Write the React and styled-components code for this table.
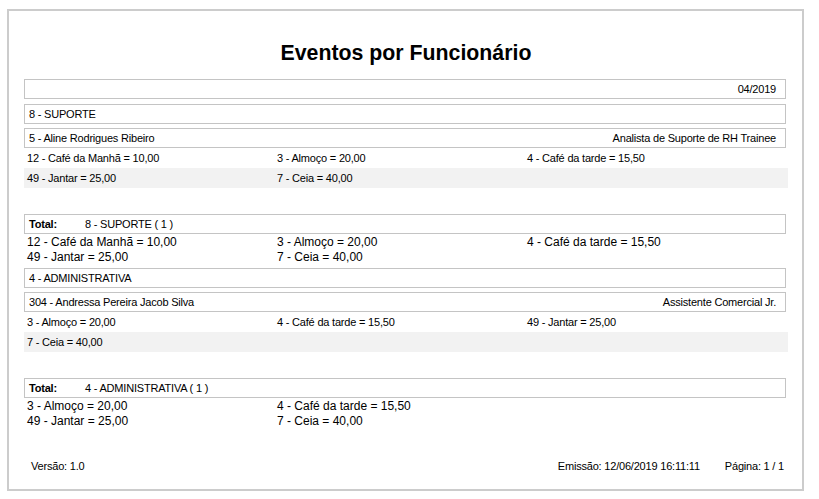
import styled, { createGlobalStyle } from "styled-components";

const GlobalStyle = createGlobalStyle`
  body {
    margin: 0;
    background: #fff;
    font-family: "Liberation Sans", Arial, sans-serif;
    color: #000;
  }
`;

const Page = styled.div`
  box-sizing: border-box;
  width: 797px;
  height: 482px;
  margin: 9px 0 0 7px;
  border: 2px solid #cccccc;
  padding: 30px 14px 0 15px;
  display: flex;
  flex-direction: column;
`;

const Title = styled.h1`
  margin: 0 0 14px;
  font-size: 21.3px;
  line-height: 24px;
  font-weight: bold;
  text-align: center;
`;

const Box = styled.div`
  box-sizing: border-box;
  width: 762px;
  height: 20px;
  margin-top: ${(p) => p.$gap || 0}px;
  border: 1px solid #c4c4c4;
  padding: 0 9px 0 4px;
  display: flex;
  align-items: center;
  justify-content: space-between;
  font-size: 11px;
  letter-spacing: -0.2px;
  white-space: nowrap;
`;

const TotalLabel = styled.span`
  display: inline-block;
  width: 56px;
  font-weight: bold;
`;

const EventRow = styled.div`
  display: grid;
  grid-template-columns: repeat(3, 250px);
  height: 20px;
  align-items: center;
  padding-left: 3px;
  background: ${(p) => (p.$shaded ? "#f2f2f2" : "transparent")};
  font-size: 11px;
  letter-spacing: -0.2px;
  white-space: nowrap;
`;

const TotalGrid = styled.div`
  display: grid;
  grid-template-columns: repeat(3, 250px);
  padding: 1px 0 0 3px;
  font-size: 12px;
  line-height: 15px;
  white-space: nowrap;
`;

const Section = styled.div`
  margin-top: ${(p) => p.$gap}px;
`;

const Footer = styled.div`
  margin-top: auto;
  display: flex;
  align-items: center;
  padding: 0 4px 16px 7px;
  font-size: 11px;
  line-height: 14px;
  letter-spacing: -0.2px;
`;

const Spacer = styled.div`
  flex: 1;
`;

const FooterItem = styled.span`
  margin-left: ${(p) => p.$gap || 0}px;
`;

const sections = [
  {
    dept: "8 - SUPORTE",
    employee: "5 - Aline Rodrigues Ribeiro",
    role: "Analista de Suporte de RH Trainee",
    events: [
      ["12 - Café da Manhã = 10,00", "3 - Almoço = 20,00", "4 - Café da tarde = 15,50"],
      ["49 - Jantar = 25,00", "7 - Ceia = 40,00", ""],
    ],
    totals: [
      ["12 - Café da Manhã = 10,00", "3 - Almoço = 20,00", "4 - Café da tarde = 15,50"],
      ["49 - Jantar = 25,00", "7 - Ceia = 40,00", ""],
    ],
  },
  {
    dept: "4 - ADMINISTRATIVA",
    employee: "304 - Andressa Pereira Jacob Silva",
    role: "Assistente Comercial Jr.",
    events: [
      ["3 - Almoço = 20,00", "4 - Café da tarde = 15,50", "49 - Jantar = 25,00"],
      ["7 - Ceia = 40,00", "", ""],
    ],
    totals: [
      ["3 - Almoço = 20,00", "4 - Café da tarde = 15,50", ""],
      ["49 - Jantar = 25,00", "7 - Ceia = 40,00", ""],
    ],
  },
];

const App = function () {
  return (
    <>
      <GlobalStyle />
      <Page>
        <Title>Eventos por Funcionário</Title>
        <Box>
          <span />
          <span>04/2019</span>
        </Box>
        {sections.map((s, i) => (
          <Section key={s.dept} $gap={i === 0 ? 5 : 3}>
            <Box>
              <span>{s.dept}</span>
            </Box>
            <Box $gap={4}>
              <span>{s.employee}</span>
              <span>{s.role}</span>
            </Box>
            {s.events.map((row, r) => (
              <EventRow key={r} $shaded={r % 2 === 1}>
                {row.map((cell, c) => (
                  <span key={c}>{cell}</span>
                ))}
              </EventRow>
            ))}
            <Box $gap={26}>
              <span>
                <TotalLabel>Total:</TotalLabel>
                {s.dept} ( 1 )
              </span>
            </Box>
            <TotalGrid>
              {s.totals.flat().map((cell, c) => (
                <span key={c}>{cell}</span>
              ))}
            </TotalGrid>
          </Section>
        ))}
        <Footer>
          <span>Versão: 1.0</span>
          <Spacer />
          <FooterItem>Emissão: 12/06/2019 16:11:11</FooterItem>
          <FooterItem $gap={25}>Página: 1 / 1</FooterItem>
        </Footer>
      </Page>
    </>
  );
};

export default App;
